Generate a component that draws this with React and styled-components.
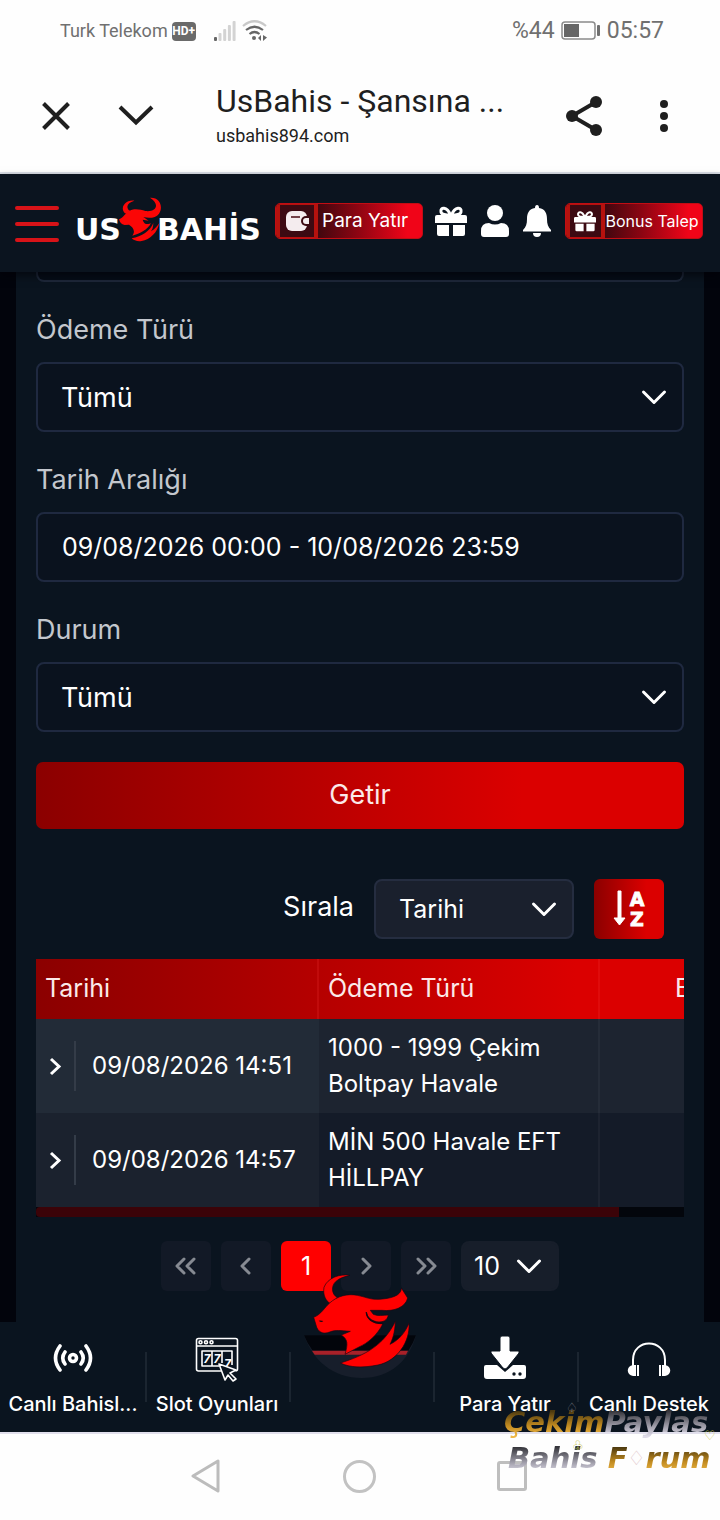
import React from "react";
import styled, { createGlobalStyle } from "styled-components";

const GlobalStyle = createGlobalStyle`
  *, *::before, *::after { box-sizing: border-box; }
  body { margin: 0; background: #02040c; font-family: Inter, "Noto Sans", sans-serif; }
  button, input, select { font: inherit; color: inherit; margin: 0; }
  button { border: 0; padding: 0; background: none; cursor: pointer; }
  a { color: inherit; text-decoration: none; }
  svg { display: block; flex: none; }
`;

const Page = styled.div`
  min-height: 100vh;
  display: flex;
  flex-direction: column;
  overflow: hidden;
`;

/* ---------- phone status bar ---------- */

const StatusBar = styled.div`
  height: 60px;
  padding: 2px 56px 0 60px;
  display: flex;
  align-items: center;
  justify-content: space-between;
  background: #fefefe;
  color: #707070;
  font-family: Roboto, sans-serif;
`;

const StatusGroup = styled.div`
  display: flex;
  align-items: center;
  gap: ${(p) => p.$gap}px;
`;

const StatusText = styled.span`
  font-size: ${(p) => p.$size}px;
  line-height: 28px;
`;

const HdBadge = styled.span`
  width: 24px;
  height: 19px;
  border-radius: 4px;
  background: #6a6a6a;
  color: #fff;
  font-size: 12px;
  line-height: 19px;
  font-weight: 700;
  text-align: center;
`;

/* ---------- in-app browser bar ---------- */

const BrowserBar = styled.header`
  height: 114px;
  padding: 0 36px;
  display: flex;
  align-items: center;
  background: #fefefe;
  border-bottom: 2px solid #dde1e9;
  color: #1f1f1f;
  font-family: Roboto, sans-serif;
`;

const BarButton = styled.button`
  width: 40px;
  height: 56px;
  display: flex;
  align-items: center;
  justify-content: center;
  margin-right: ${(p) => p.$after || 0}px;
`;

const PageTitle = styled.div`
  flex: 1;
  min-width: 0;
`;

const TitleLine = styled.div`
  font-size: 32px;
  line-height: 40px;
  white-space: nowrap;
`;

const HostLine = styled.div`
  font-size: 18px;
  line-height: 30px;
`;

/* ---------- site header ---------- */

const SiteHeader = styled.header`
  height: 98px;
  padding: 0 17px 4px 15px;
  display: flex;
  align-items: center;
  background: #0b141f;
  box-shadow: 0 4px 8px rgba(0, 0, 6, 0.6);
  position: relative;
`;

const MenuButton = styled.button`
  width: 44px;
  height: 36px;
  margin-top: 6px;
  display: flex;
  flex-direction: column;
  justify-content: space-between;
`;

const MenuLine = styled.span`
  height: 4px;
  border-radius: 2px;
  background: #d81318;
`;

const Logo = styled.a`
  width: 188px;
  margin: 0 12px 0 16px;
  display: flex;
  align-items: flex-end;
  color: #fff;
  font: 700 30px/32px "DejaVu Sans", sans-serif;

  svg { margin: 0 -6px 4px -3px; }
`;

const HeaderIcons = styled.div`
  display: flex;
  align-items: center;
  gap: 14px;
  margin: 0 14px 0 12px;
  color: #fff;
`;

const PromoButton = styled.button`
  flex: 1 1 ${(p) => p.$basis}px;
  height: 36px;
  display: flex;
  align-items: center;
  overflow: hidden;
  border: 1px solid #c20d14;
  border-radius: 5px;
  background: linear-gradient(90deg, #45070f 30%, #8a0512 55%, #f00418 90%);
  color: #fff;
  font-size: ${(p) => p.$size}px;
  line-height: 24px;
  white-space: nowrap;
`;

const PromoIcon = styled.span`
  width: ${(p) => p.$width}px;
  height: 100%;
  margin-right: ${(p) => p.$after}px;
  flex: none;
  display: flex;
  align-items: center;
  justify-content: center;
  border: solid #b5120e;
  border-width: 1px 4px 1px 4px;
  background: #3c0a12;
`;

const IconButton = styled.button`
  display: flex;
`;

/* ---------- transaction panel ---------- */

const Panel = styled.main`
  flex: 1;
  margin: 0 16px;
  padding: 0 20px 31px;
  background: #0a141f;
  color: #fff;
`;

const ScrolledField = styled.div`
  height: 10px;
  border: 2px solid #1e283a;
  border-top: 0;
  border-radius: 0 0 8px 8px;
  background: #060d18;
`;

const Field = styled.div`
  margin-top: 30px;
`;

const FieldLabel = styled.label`
  display: block;
  margin-bottom: 14px;
  color: #c3c7cd;
  font-size: 27px;
  line-height: 36px;
`;

const SelectBox = styled.div`
  position: relative;
  width: ${(p) => p.$width || "100%"};
  height: ${(p) => p.$height}px;

  select {
    appearance: none;
    width: 100%;
    height: 100%;
    padding: 0 ${(p) => p.$pad}px;
    border: 2px solid ${(p) => p.$line || "#1f2940"};
    border-radius: 8px;
    outline: 0;
    background: ${(p) => p.$fill || "#0a121e"};
    font-size: ${(p) => p.$size || 25}px;
  }

  svg {
    position: absolute;
    top: 50%;
    right: 16px;
    margin-top: -12px;
    pointer-events: none;
  }
`;

const TextInput = styled.input`
  width: 100%;
  height: 70px;
  padding: 0 24px;
  border: 2px solid #1f2940;
  border-radius: 8px;
  outline: 0;
  background: #0a121e;
  font-size: 25px;
`;

const SubmitButton = styled.button`
  width: 100%;
  height: 67px;
  margin-top: 30px;
  padding-bottom: 2px;
  border-radius: 7px;
  background: linear-gradient(90deg, #8b0000, #db0000 75%);
  color: #fbe9e9;
  font-size: 27px;
`;

const SortRow = styled.div`
  display: flex;
  align-items: center;
  justify-content: flex-end;
  gap: 20px;
  padding: 50px 20px 20px;
`;

const SortLabel = styled.label`
  padding-bottom: 4px;
  font-size: 27px;
  line-height: 36px;
`;

const SortButton = styled.button`
  width: 70px;
  height: 60px;
  display: flex;
  align-items: center;
  justify-content: center;
  border-radius: 6px;
  background: linear-gradient(90deg, #8b0000, #db0000 75%);
`;

const TableScroller = styled.div`
  overflow: hidden;
`;

const Table = styled.table`
  width: 720px;
  table-layout: fixed;
  border-collapse: collapse;
  text-align: left;
  font-size: 24px;
  line-height: 36px;

  thead tr { background: linear-gradient(90deg, #8b0000, #db0000 75%); }
  th {
    height: 60px;
    padding: 0 9px 2px;
    font-size: 25px;
    font-weight: 400;
    color: #fbe9e9;
    border-right: 2px solid rgba(255, 70, 70, 0.16);
  }
  td {
    height: 94px;
    padding: 0 9px;
    border-right: 2px solid rgba(255, 255, 255, 0.04);
  }
  tbody tr { background: #1d2430; }
  tbody tr td:first-child { background: #222b37; border-right-color: #222b37; padding: 0 0 0 10px; }
  tbody tr:nth-child(even) { background: #141b28; }
  tbody tr:nth-child(even) td:first-child { background: #1b222e; border-right-color: #1b222e; }
  th:last-child { padding-left: 75px; }
`;

const DateCell = styled.div`
  display: flex;
  align-items: center;
  white-space: nowrap;
`;

const Expander = styled.button`
  width: 30px;
  height: 50px;
  margin-right: 16px;
  display: flex;
  align-items: center;
  border-right: 2px solid #343c48;
`;

const ScrollTrack = styled.div`
  height: 10px;
  background: #03060c;
`;

const ScrollThumb = styled.div`
  width: 90%;
  height: 100%;
  border-radius: 4px 0 0 4px;
  background: #3b0308;
`;

const Pager = styled.nav`
  display: flex;
  justify-content: center;
  gap: 10px;
  margin-top: 24px;
`;

const PageButton = styled.button`
  width: 50px;
  height: 50px;
  display: flex;
  align-items: center;
  justify-content: center;
  border-radius: 6px;
  background: ${(p) => (p.$active ? "#ff0000" : "#121926")};
  color: ${(p) => (p.$active ? "#fff" : "#868a92")};
  font-size: 25px;
`;

/* ---------- bottom site navigation ---------- */

const TabBar = styled.nav`
  position: relative;
  height: 112px;
  display: grid;
  grid-template-columns: repeat(5, 1fr);
  background: #0a141f;
  border-bottom: 2px solid #e1dfec;
  color: #fff;
`;

const Tab = styled.a`
  position: relative;
  display: flex;
  flex-direction: column;
  align-items: center;
  padding: 12px 0 0 2px;
  font-size: 20px;
  line-height: 28px;
  font-weight: 500;
  white-space: nowrap;

  &::after {
    content: "";
    position: absolute;
    right: -3px;
    top: 30px;
    width: 2px;
    height: 50px;
    background: #1b2530;
  }
  &:last-child::after { content: none; }
  svg { margin-bottom: 8px; }
`;

const BullButton = styled.a`
  position: absolute;
  left: 50%;
  top: -62px;
  margin-left: -70px;
`;

/* ---------- android navigation ---------- */

const SystemBar = styled.footer`
  position: relative;
  height: 86px;
  padding: 0 193px 2px 191px;
  display: flex;
  align-items: center;
  justify-content: space-between;
  background: #fefefe;
`;

const BackGlyph = styled.div`
  color: #bcbcbc;
`;

const HomeRing = styled.div`
  width: 33px;
  height: 33px;
  border: 3px solid #c2c2c2;
  border-radius: 50%;
`;

const RecentSquare = styled.div`
  width: 30px;
  height: 30px;
  border: 3px solid #bebebe;
  border-radius: 3px;
`;

const Watermark = styled.div`
  position: absolute;
  right: 0;
  top: -30px;
  width: 216px;
  pointer-events: none;
  font: italic 700 29px/36px "DejaVu Sans", sans-serif;
  white-space: nowrap;
`;

const WatermarkLine = styled.div`
  display: flex;
  padding-left: ${(p) => p.$indent || 0}px;
`;

const Tint = styled.span`
  background: ${(p) =>
    p.$gold
      ? "linear-gradient(180deg, #4c390f 20%, #c08a20 60%, #efb847 90%)"
      : "linear-gradient(180deg, #35353b 20%, #9a98a4 60%, #dedbe8 90%)"};
  background-clip: text;
  color: transparent;
`;

const Suit = styled.span`
  color: #e3c9cd;
  font-style: normal;
  font-weight: 400;
  font-size: 20px;
`;

const FloatSuit = styled.span`
  position: absolute;
  left: ${(p) => p.$x}px;
  top: ${(p) => p.$y}px;
  color: ${(p) => p.$color};
  font: 400 13px/16px "DejaVu Sans", sans-serif;
`;

/* ---------- drawings ---------- */

const Stroke = ({ w, h, box, d, width = 2, cap = "round" }) => (
  <svg width={w} height={h} viewBox={box || `0 0 ${w} ${h}`} fill="none" stroke="currentColor"
    strokeWidth={width} strokeLinecap={cap} strokeLinejoin={cap === "round" ? "round" : "miter"} aria-hidden="true">
    <path d={d} />
  </svg>
);

const ChevronDown = () => <Stroke w={28} h={24} d="M3.500 7 14 17.500 24.500 7" width={3} />;

const SignalIcon = () => (
  <svg width="22" height="22" viewBox="0 0 22 22" aria-hidden="true">
    <rect x="0" y="17" width="3" height="4" rx="1" fill="#666" />
    <g fill="#d3d3d3">
      <rect x="4.500" y="13" width="3" height="8" rx="1" />
      <rect x="9.200" y="9" width="3" height="12" rx="1" />
      <rect x="13.900" y="5" width="3" height="16" rx="1" />
      <rect x="18.600" y="1" width="3" height="20" rx="1" />
    </g>
  </svg>
);

const WifiIcon = () => (
  <svg width="26" height="22" viewBox="0 0 26 22" fill="none" aria-hidden="true">
    <path d="M1 6Q12.500-3.500 24 6" stroke="#c9c9c9" strokeWidth="2.200" />
    <path d="M4 10Q12.500 3.500 21 10M7.500 14Q12.500 10 17.500 14" stroke="#666" strokeWidth="2.200" />
    <circle cx="12" cy="18" r="2" fill="#666" />
    <path d="M19 15v6l-3-3zM21 15v6l4-3.500z" fill="#666" />
  </svg>
);

const BatteryIcon = () => (
  <svg width="40" height="20" viewBox="0 0 40 20" aria-hidden="true">
    <rect x="1" y="1" width="33" height="17" rx="3" fill="none" stroke="#8b8b8b" strokeWidth="1.500" />
    <rect x="3" y="3" width="15" height="13" fill="#666" />
    <rect x="36" y="4" width="3" height="11" rx="1" fill="#707070" />
  </svg>
);

const ShareIcon = () => (
  <svg width="38" height="42" viewBox="0 0 38 42" fill="#1f1f1f" aria-hidden="true">
    <path d="M31 7 7 21 31 35" fill="none" stroke="#1f1f1f" strokeWidth="4" />
    <circle cx="31" cy="7" r="6" /><circle cx="7" cy="21" r="6" /><circle cx="31" cy="35" r="6" />
  </svg>
);

const MoreIcon = () => (
  <svg width="8" height="34" viewBox="0 0 8 34" fill="#1f1f1f" aria-hidden="true">
    <circle cx="4" cy="5" r="4" /><circle cx="4" cy="17" r="4" /><circle cx="4" cy="29" r="4" />
  </svg>
);

const LogoBull = () => (
  <svg width="45" height="46" viewBox="356 86 135 138" fill="#fb0606" aria-hidden="true">
    <path d="M405 100C384 97 367 112 371 129 375 139 382 143 388 137L393 131C382 126 377 108 405 100Z" />
    <path d="M452 91C483 89 492 121 479 139 469 152 450 154 432 149L448 160 430 157C434 174 448 171 455 167 445 188 422 198 399 205 409 192 402 180 389 172L376 173C366 171 361 165 359 156 374 151 377 134 398 127 413 124 425 127 438 131 474 135 481 108 452 91Z" />
    <path d="M397 213C427 207 453 191 462 167 462 181 458 188 455 192 467 185 475 175 480 167 474 197 452 216 427 221 416 224 403 219 397 213Z" />
  </svg>
);

const WalletIcon = () => (
  <svg width="24" height="22" viewBox="0 0 24 22" aria-hidden="true">
    <rect x="1" y="1" width="21" height="20" rx="6" fill="#f4ecee" />
    <path d="M6 7h9" stroke="#4a0b13" strokeWidth="1.500" />
    <path d="M24 6h-3a5 5 0 0 0 0 10h3z" fill="#3c0a12" />
    <path d="M24 8h-3a3 3 0 0 0 0 6h3z" fill="#f4ecee" />
  </svg>
);

const GiftIcon = ({ w = 32, h = 30 }) => (
  <svg width={w} height={h} viewBox="0 0 32 30" fill="currentColor" aria-hidden="true">
    <path d="M15.500 9C12 0 5 1 6 6c.5 3 5 3 9.500 3ZM16.500 9C20 0 27 1 26 6c-.5 3-5 3-9.500 3Z" fill="none" stroke="currentColor" strokeWidth="3" />
    <path d="M2 9h28q2 0 2 2v6H0v-6q0-2 2-2ZM2 19h12v11H4q-2 0-2-2ZM18 19h12v9q0 2-2 2H18Z" />
  </svg>
);

const UserIcon = () => (
  <svg width="28" height="32" viewBox="0 0 28 32" fill="currentColor" aria-hidden="true">
    <circle cx="14" cy="8" r="8" />
    <path d="M8 18q6 3 12 0 8 0 8 8v3q0 3-3 3H3q-3 0-3-3v-3q0-8 8-8Z" />
  </svg>
);

const BellIcon = () => (
  <svg width="28" height="32" viewBox="0 0 28 32" fill="currentColor" aria-hidden="true">
    <path d="M14 0q2 0 2 3c6 1 8 5 8 11 0 5 1 8 4 11v1.500H0V25c3-3 4-6 4-11C4 8 6 4 12 3q0-3 2-3ZM10 28h8q0 4-4 4t-4-4Z" />
  </svg>
);

const SortIcon = () => (
  <svg width="34" height="46" viewBox="-1 -4 34 46" fill="#fff" aria-hidden="true">
    <path d="M5 1h3v27h4l-5.500 7L1 28h4z" stroke="#fff" strokeWidth="1" strokeLinejoin="round" />
    <text x="24" y="16" textAnchor="middle" fontFamily="DejaVu Sans" fontWeight="700" fontSize="19" stroke="#fff" strokeWidth="0.800">A</text>
    <text x="24" y="36" textAnchor="middle" fontFamily="DejaVu Sans" fontWeight="700" fontSize="19" stroke="#fff" strokeWidth="0.800">Z</text>
  </svg>
);

const LiveIcon = () => (
  <svg width="48" height="48" viewBox="0 0 48 48" fill="none" stroke="#fff" strokeWidth="3.600" strokeLinecap="round" aria-hidden="true">
    <circle cx="24" cy="24" r="3.500" />
    <path d="M16 18Q11.500 24 16 30M32 18Q36.500 24 32 30M11 12Q2 24 11 36M37 12Q46 24 37 36" />
  </svg>
);

const SlotIcon = () => (
  <svg width="48" height="48" viewBox="0 0 48 48" fill="none" stroke="#fff" strokeWidth="1.600" strokeLinejoin="round" aria-hidden="true">
    <path d="M28 37H5.500q-2 0-2-2V6.500q0-2 2-2h37q2 0 2 2V35q0 2-2 2M3.500 12h41" />
    <circle cx="7.500" cy="8.300" r="1.500" /><circle cx="13" cy="8.300" r="1.500" /><circle cx="18.500" cy="8.300" r="1.500" />
    <path d="M26 32H9V17h30v14M19 17v15M29 17v12" />
    <g fill="#fff" stroke="none" fontFamily="Inter" fontStyle="italic" fontWeight="700" fontSize="12">
      <text x="10.500" y="29">7</text><text x="20.500" y="29">7</text><text x="31" y="34">7</text>
    </g>
    <path d="M26 30 43 36 37 39 43 45 40 47 35 41 32 46Z" fill="#0a141f" />
  </svg>
);

const DepositIcon = () => (
  <svg width="48" height="48" viewBox="0 0 48 48" fill="#fff" aria-hidden="true">
    <path d="M5 31h11l8 7 8-7h11q2 0 2 2v9q0 3-3 3H6q-3 0-3-3v-9q0-2 2-2Z" />
    <path d="M19 4q0-2 2-2h6q2 0 2 2v13h9v2L26 34q-2 2-4 0L10 19v-2h9Z" stroke="#0a141f" strokeWidth="1" />
    <circle cx="33" cy="40" r="1.700" fill="#0a141f" /><circle cx="39" cy="40" r="1.700" fill="#0a141f" />
  </svg>
);

const HeadsetIcon = () => (
  <svg width="48" height="48" viewBox="0 0 48 48" fill="#fff" aria-hidden="true">
    <path d="M8 33V26C8 4 40 4 40 26v7" fill="none" stroke="#fff" strokeWidth="2" />
    <path d="M8 31C1 32 1 41 8 42ZM40 31c7 1 7 10 0 11ZM8 31h3v11H8ZM12 31h2v11h-2ZM34 31h2v11h-2ZM37 31h3v11h-3Z" />
  </svg>
);

const BullEmblem = () => (
  <svg width="140" height="130" viewBox="0 0 420 390" aria-hidden="true">
    <path d="M42 226H378C356 304 300 354 215 354S70 304 42 226Z" fill="#171e2b" />
    <path d="M42 226H378Q370 250 355 272H68Q50 248 42 226Z" fill="#02050b" />
    <path d="M66 272H354L348 284H74Z" fill="#a82129" />
    <g fill="#ff0000" stroke="#170713" strokeWidth="2">
      <path d="M180 46C150 40 112 54 102 82 98 105 107 122 122 132L142 113C123 101 124 77 137 65 148 54 164 50 180 46Z" />
      <path d="M71 172C94 163 103 143 119 129 142 108 173 100 202 106 224 110 240 119 264 118 302 116 334 108 334 84L353 114C347 141 313 155 276 151L241 151 250 163C263 169 278 166 295 165 292 181 280 188 260 185 243 182 232 171 229 157 230 175 245 190 279 191 261 226 234 249 207 261L165 283C174 252 174 238 154 225L181 214C151 212 137 209 119 216 99 225 82 215 78 195Z" />
      <path d="M151 309C224 286 281 257 316 184 315 219 307 239 300 253 329 239 345 217 357 190 361 244 322 303 264 315 219 324 179 323 151 309Z" />
    </g>
    <path d="M229 157C230 175 245 190 279 191" fill="none" stroke="#1b0710" strokeWidth="4" />
    <path d="M86 182q7-2 14 1-6 6-14-1Z" fill="#170713" />
  </svg>
);

const BackIcon = () => <Stroke w={30} h={34} d="M27 2v30L2 17Z" width={3} />;

/* ---------- page ---------- */

const rows = [
  { date: "09/08/2026 14:51", method: ["1000 - 1999 Çekim", "Boltpay Havale"] },
  { date: "09/08/2026 14:57", method: ["MİN 500 Havale EFT", "HİLLPAY"] },
];

const tabs = [
  { label: "Canlı Bahisl...", Icon: LiveIcon },
  { label: "Slot Oyunları", Icon: SlotIcon },
  null,
  { label: "Para Yatır", Icon: DepositIcon },
  { label: "Canlı Destek", Icon: HeadsetIcon },
];

const Dropdown = ({ id, value, label, ...box }) => (
  <SelectBox {...box}>
    <select id={id} aria-label={label} defaultValue={value}>
      <option>{value}</option>
    </select>
    <ChevronDown />
  </SelectBox>
);

export default function App() {
  return (
    <Page>
      <GlobalStyle />
      <StatusBar>
        <StatusGroup $gap={18}>
          <StatusGroup $gap={4}>
            <StatusText $size={18}>Turk Telekom</StatusText>
            <HdBadge>HD+</HdBadge>
          </StatusGroup>
          <StatusGroup $gap={6}>
            <SignalIcon />
            <WifiIcon />
          </StatusGroup>
        </StatusGroup>
        <StatusGroup $gap={6}>
          <StatusText $size={23}>%44</StatusText>
          <BatteryIcon />
          <StatusText $size={23}>05:57</StatusText>
        </StatusGroup>
      </StatusBar>

      <BrowserBar>
        <BarButton $after={40} aria-label="Kapat">
          <Stroke w={28} h={28} d="M1.500 1.500 26.500 26.500M26.500 1.500 1.500 26.500" width={4} cap="butt" />
        </BarButton>
        <BarButton $after={60} aria-label="Küçült">
          <Stroke w={36} h={24} d="M2 3 18 18.500 34 3" width={4} cap="butt" />
        </BarButton>
        <PageTitle>
          <TitleLine>UsBahis - Şansına ...</TitleLine>
          <HostLine>usbahis894.com</HostLine>
        </PageTitle>
        <BarButton $after={40} aria-label="Paylaş"><ShareIcon /></BarButton>
        <BarButton aria-label="Diğer"><MoreIcon /></BarButton>
      </BrowserBar>

      <SiteHeader>
        <MenuButton aria-label="Menü"><MenuLine /><MenuLine /><MenuLine /></MenuButton>
        <Logo href="#" aria-label="UsBahis">US<LogoBull />BAHİS</Logo>
        <PromoButton $basis={146} $size={19}>
          <PromoIcon $width={42} $after={4}><WalletIcon /></PromoIcon>
          Para Yatır
        </PromoButton>
        <HeaderIcons>
          <IconButton aria-label="Hediyeler"><GiftIcon /></IconButton>
          <IconButton aria-label="Hesap"><UserIcon /></IconButton>
          <IconButton aria-label="Bildirimler"><BellIcon /></IconButton>
        </HeaderIcons>
        <PromoButton $basis={137} $size={16}>
          <PromoIcon $width={39} $after={1}><GiftIcon w={22} h={22} /></PromoIcon>
          Bonus Talep
        </PromoButton>
      </SiteHeader>

      <Panel>
        <ScrolledField />
        <Field>
          <FieldLabel htmlFor="method">Ödeme Türü</FieldLabel>
          <Dropdown id="method" value="Tümü" $height={70} $pad={23} $size={27} />
        </Field>
        <Field>
          <FieldLabel htmlFor="range">Tarih Aralığı</FieldLabel>
          <TextInput id="range" defaultValue="09/08/2026 00:00 - 10/08/2026 23:59" />
        </Field>
        <Field>
          <FieldLabel htmlFor="status">Durum</FieldLabel>
          <Dropdown id="status" value="Tümü" $height={70} $pad={23} $size={27} />
        </Field>
        <SubmitButton>Getir</SubmitButton>

        <SortRow>
          <SortLabel htmlFor="sort">Sırala</SortLabel>
          <Dropdown id="sort" value="Tarihi" $width="200px" $height={60} $pad={23} $fill="#1a202d" $line="#252d40" />
          <SortButton aria-label="Sıralama yönü"><SortIcon /></SortButton>
        </SortRow>

        <TableScroller>
          <Table>
            <colgroup><col width="282" /><col width="281" /><col width="157" /></colgroup>
            <thead>
              <tr><th>Tarihi</th><th>Ödeme Türü</th><th>E</th></tr>
            </thead>
            <tbody>
              {rows.map((row) => (
                <tr key={row.date}>
                  <td>
                    <DateCell>
                      <Expander aria-label="Detay">
                        <Stroke w={18} h={20} d="M5 3 13 10.500 5 18" width={3} cap="butt" />
                      </Expander>
                      {row.date}
                    </DateCell>
                  </td>
                  <td>{row.method[0]}<br />{row.method[1]}</td>
                  <td />
                </tr>
              ))}
            </tbody>
          </Table>
          <ScrollTrack><ScrollThumb /></ScrollTrack>
        </TableScroller>

        <Pager aria-label="Sayfalar">
          <PageButton aria-label="İlk"><Stroke w={24} h={20} d="M10 3 3 10 10 17M20 3 13 10 20 17" width={3} /></PageButton>
          <PageButton aria-label="Önceki"><Stroke w={16} h={20} d="M11 3 4 10 11 17" width={3} /></PageButton>
          <PageButton $active>1</PageButton>
          <PageButton aria-label="Sonraki"><Stroke w={16} h={20} d="M5 3 12 10 5 17" width={3} /></PageButton>
          <PageButton aria-label="Son"><Stroke w={24} h={20} d="M4 3 11 10 4 17M14 3 21 10 14 17" width={3} /></PageButton>
          <Dropdown label="Sayfa boyutu" value="10" $width="98px" $height={50} $pad={11} $fill="#171e2a" $line="#171e2a" />
        </Pager>
      </Panel>

      <TabBar>
        {tabs.map((tab, i) =>
          tab ? (
            <Tab key={tab.label} href="#"><tab.Icon />{tab.label}</Tab>
          ) : (
            <Tab key={i} as="div" />
          )
        )}
        <BullButton href="#" aria-label="Ana sayfa"><BullEmblem /></BullButton>
      </TabBar>

      <SystemBar>
        <BackGlyph><BackIcon /></BackGlyph>
        <HomeRing />
        <RecentSquare />
        <Watermark>
          <WatermarkLine><Tint $gold>Çekim</Tint><Tint>Paylas</Tint></WatermarkLine>
          <WatermarkLine $indent={4}>
            <Tint>Bahis</Tint>&nbsp;<Tint $gold>F</Tint><Suit>♢</Suit><Tint $gold>rum</Tint>
          </WatermarkLine>
          <FloatSuit $x={62} $y={-4} $color="#777780">♤</FloatSuit>
          <FloatSuit $x={68} $y={34} $color="#bfc03a">♧</FloatSuit>
          <FloatSuit $x={200} $y={24} $color="#c9ca48">♡</FloatSuit>
        </Watermark>
      </SystemBar>
    </Page>
  );
}
